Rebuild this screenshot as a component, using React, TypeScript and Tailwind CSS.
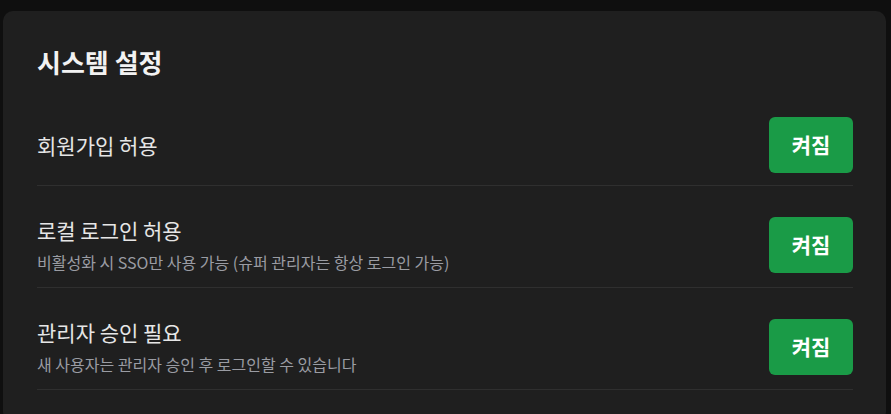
import React from "react";

type Row = { label: string; desc?: string };

const rows: Row[] = [
  { label: "회원가입 허용" },
  { label: "로컬 로그인 허용", desc: "비활성화 시 SSO만 사용 가능 (슈퍼 관리자는 항상 로그인 가능)" },
  { label: "관리자 승인 필요", desc: "새 사용자는 관리자 승인 후 로그인할 수 있습니다" },
];

export default function App() {
  return (
    <div
      className="min-h-screen bg-[#0f0f0f] pl-[3px] pr-[5px] pt-[11px]"
      style={{ fontFamily: '"Noto Sans CJK KR", "Noto Sans", sans-serif' }}
    >
      <div className="rounded-[10px] bg-[#1f1f1f] pl-[34px] pr-[33px] pt-[35px] pb-8">
        <h2 className="text-[26px] font-bold leading-8 text-[#f2f2f2]">시스템 설정</h2>
        <div className="mt-[27px] flex flex-col gap-[17px]">
          {rows.map((r) => (
            <div
              key={r.label}
              className="flex items-center justify-between border-b border-[#2f2f2f] py-3"
            >
              <div className="flex flex-col">
                <span className="text-[21px] leading-[30px] text-[#e6e6e6]">{r.label}</span>
                {r.desc && (
                  <span className="mt-1 text-[16px] leading-[26px] text-[#9a9ca3]">{r.desc}</span>
                )}
              </div>
              <button className="flex h-14 w-[84px] items-center justify-center rounded-md bg-[#1a9b47] text-[21px] font-bold text-white">
                켜짐
              </button>
            </div>
          ))}
        </div>
      </div>
    </div>
  );
}
